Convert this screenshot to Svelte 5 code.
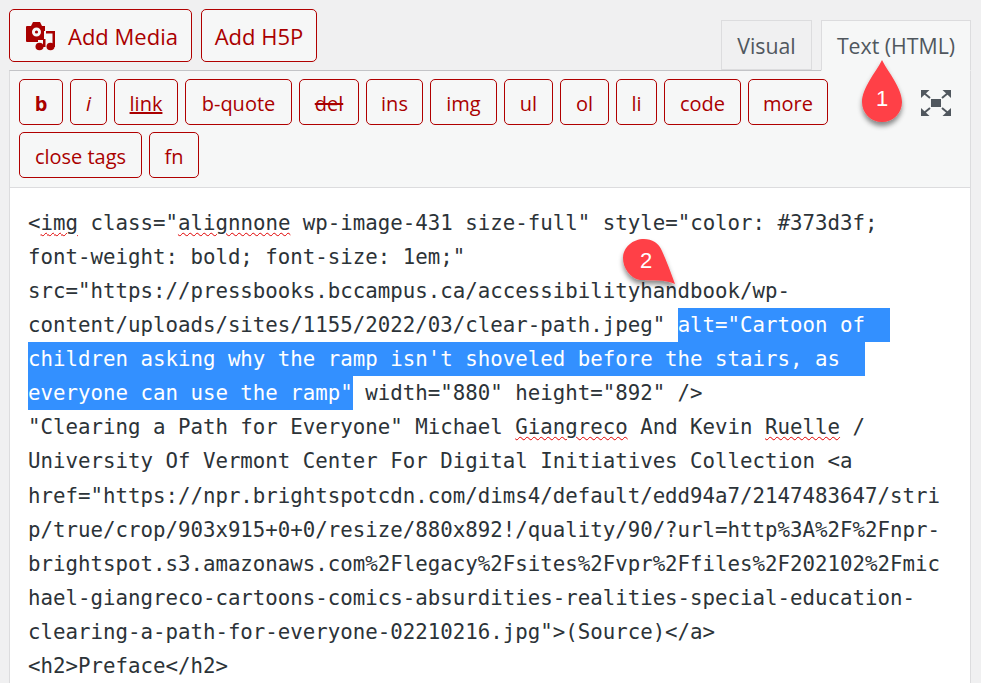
<script>
  const row1 = [
    { label: 'b', w: 44, cls: 'bold' },
    { label: 'i', w: 37, cls: 'ital' },
    { label: 'link', w: 64, cls: 'under' },
    { label: 'b-quote', w: 107 },
    { label: 'del', w: 60, cls: 'strike' },
    { label: 'ins', w: 57 },
    { label: 'img', w: 67 },
    { label: 'ul', w: 49 },
    { label: 'ol', w: 49 },
    { label: 'li', w: 41 },
    { label: 'code', w: 77 },
    { label: 'more', w: 80 }
  ];
  const row2 = [
    { label: 'close tags', w: 123 },
    { label: 'fn', w: 50 }
  ];
</script>

<div class="page">
  <div class="top">
    <div class="media">
      <button class="big add-media">
        <svg class="cam" viewBox="26 22 30 30" width="30" height="30">
          <path fill="#a80000" fill-rule="evenodd" d="M27 27h4l2-4h7l2 4h3v5h-1v9h-6v2H27a1 1 0 0 1-1-1V28a1 1 0 0 1 1-1zm9.500 1.500a4.500 4.500 0 1 0 0 9 4.500 4.500 0 0 0 0-9z"/>
          <circle cx="36.500" cy="33" r="1.600" fill="#a80000"/>
          <rect x="43" y="40" width="2.500" height="8" fill="#a80000"/>
          <ellipse cx="39.500" cy="47.500" rx="4" ry="3.800" fill="#a80000"/>
          <path fill="#a80000" d="M46 32h9v16h-2.500V34.500H46z"/>
          <ellipse cx="50.500" cy="47.500" rx="4" ry="3.800" fill="#a80000"/>
        </svg>
        Add Media
      </button>
      <button class="big">Add H5P</button>
    </div>
    <div class="tabs">
      <div class="tab">Visual</div>
      <div class="tab on">Text (HTML)</div>
    </div>
  </div>

  <div class="editor">
    <div class="bar">
      <div class="tools">
        <div class="row">
          {#each row1 as b}
            <button class="qt {b.cls ?? ''}" style="width: {b.w}px">{b.label}</button>
          {/each}
        </div>
        <div class="row">
          {#each row2 as b}
            <button class="qt" style="width: {b.w}px">{b.label}</button>
          {/each}
        </div>
      </div>
      <svg class="full" viewBox="0 0 30 26" width="30" height="26">
        <rect x="10" y="9" width="10" height="8" fill="#50575e"/>
        <g fill="#50575e" stroke="#50575e">
          <path stroke="none" d="M0 0h8.500L0 8z"/>
          <path stroke="none" d="M30 0h-8.500L30 8z"/>
          <path stroke="none" d="M0 26h8.500L0 18z"/>
          <path stroke="none" d="M30 26h-8.500L30 18z"/>
          <path stroke-width="2" d="M3 3l6 5M27 3l-6 5M3 23l6-5M27 23l-6-5"/>
        </g>
      </svg>
    </div>

    <div class="code">
      <div>&lt;<u>img</u> class="<u>alignnone</u> wp-image-431 size-full" style="color: #373d3f;</div>
      <div>font-weight: bold; font-size: 1em;"</div>
      <div>src="https://pressbooks.bccampus.ca/accessibilityhandbook/wp-</div>
      <div>content/uploads/sites/1155/2022/03/clear-path.jpeg" <mark class="tail">alt="Cartoon of</mark></div>
      <div><mark class="tail">children asking why the ramp isn't shoveled before the stairs, as</mark></div>
      <div><mark>everyone can use the ramp"</mark> width="880" height="892" /&gt;</div>
      <div>"Clearing a Path for Everyone" Michael <u>Giangreco</u> And Kevin <u>Ruelle</u> /</div>
      <div>University Of Vermont Center For Digital Initiatives Collection &lt;a</div>
      <div>href="https://npr.brightspotcdn.com/dims4/default/edd94a7/2147483647/stri</div>
      <div>p/true/crop/903x915+0+0/resize/880x892!/quality/90/?url=http%3A%2F%2Fnpr-</div>
      <div>brightspot.s3.amazonaws.com%2Flegacy%2Fsites%2Fvpr%2Ffiles%2F202102%2Fmic</div>
      <div>hael-giangreco-cartoons-comics-absurdities-realities-special-education-</div>
      <div>clearing-a-path-for-everyone-02210216.jpg"&gt;(Source)&lt;/a&gt;</div>
      <div>&lt;h2&gt;Preface&lt;/h2&gt;</div>
    </div>
  </div>

  <svg class="pins" viewBox="0 0 981 683" width="981" height="683">
    <defs>
      <filter id="drop" x="-30%" y="-30%" width="160%" height="160%">
        <feDropShadow dx="0" dy="4" stdDeviation="2.500" flood-color="#000" flood-opacity="0.45"/>
      </filter>
    </defs>
    <path filter="url(#drop)" fill="#ff4146" d="M882 60C876 72 862 88 862 102A20 20 0 0 0 902 102C902 88 888 72 882 60Z"/>
    <text x="882" y="106" class="num">1</text>
    <path filter="url(#drop)" fill="#ff4146" d="M675 284C665 279 652 281 640 280C630 278 623 268 623 258C623 247 633 239 644 239C652 239 659 243 662 251C667 262 671 273 675 284Z"/>
    <text x="646" y="268" class="num">2</text>
  </svg>
</div>

<style>
  :global(body) {
    margin: 0;
    background: #f0f0f1;
  }

  .page {
    position: relative;
    width: 981px;
    height: 683px;
    overflow: hidden;
    font-family: "Open Sans", sans-serif;
  }

  button {
    font-family: inherit;
    background: #f6f7f7;
    color: #aa0000;
    border: 1px solid #b00000;
    border-radius: 5px;
    padding: 0;
    box-sizing: border-box;
  }

  .top {
    display: flex;
    justify-content: space-between;
    height: 70px;
    padding: 0 10px 0 9px;
    box-sizing: border-box;
  }

  .media {
    display: flex;
    gap: 9px;
    padding-top: 9px;
  }

  .big {
    height: 53px;
    width: 116px;
    font-size: 22px;
    display: flex;
    align-items: center;
    justify-content: center;
  }

  .add-media {
    width: 183px;
    justify-content: flex-start;
    padding-left: 16px;
    gap: 12px;
  }

  .tabs {
    display: flex;
    gap: 9px;
    padding-top: 20px;
    position: relative;
    z-index: 1;
  }

  .tab {
    height: 50px;
    box-sizing: border-box;
    border: 1px solid #dcdcde;
    background: #f0f0f1;
    color: #50575e;
    font-size: 21.300px;
    width: 91px;
    text-align: center;
    line-height: 50px;
  }

  .tab.on {
    width: 150px;
    height: 51px;
    background: #f6f7f7;
    border-bottom-color: #f6f7f7;
  }

  .editor {
    margin: 0 10px 0 9px;
    border: 1px solid #dcdcde;
    border-top-color: #c3c4c7;
    background: #fff;
    min-height: 620px;
    box-sizing: border-box;
  }

  .bar {
    display: flex;
    justify-content: space-between;
    background: #f6f7f7;
    border-bottom: 1px solid #dcdcde;
    height: 117px;
    box-sizing: border-box;
    padding: 8px 19px 0 9px;
  }

  .tools {
    display: flex;
    flex-direction: column;
    gap: 7px;
  }

  .row {
    display: flex;
    gap: 7px;
  }

  .qt {
    height: 46px;
    font-size: 20px;
    padding-top: 3px;
  }

  .bold { font-weight: 700; }
  .ital { font-style: italic; }
  .under { text-decoration: underline; text-decoration-thickness: 2px; }
  .strike { text-decoration: line-through; text-decoration-thickness: 2px; }

  .full {
    margin-top: 11px;
  }

  .code {
    padding: 17.500px 0 0 18px;
    font-family: "DejaVu Sans Mono", monospace;
    font-size: 20.760px;
    line-height: 34px;
    color: #2c3338;
  }

  .code div {
    white-space: pre;
    height: 34.150px;
  }

  .code u {
    text-decoration: underline wavy #e00000 1px;
    text-underline-offset: 2px;
  }

  .code mark {
    display: inline-block;
    background: #3390ff;
    color: #fff;
    height: 34.150px;
    vertical-align: top;
  }

  .code .tail {
    padding-right: 25px;
  }

  .pins {
    position: absolute;
    left: 0;
    top: 0;
    z-index: 2;
    pointer-events: none;
  }

  .num {
    fill: #fff;
    font-family: "Liberation Sans", sans-serif;
    font-size: 22px;
    text-anchor: middle;
  }
</style>
